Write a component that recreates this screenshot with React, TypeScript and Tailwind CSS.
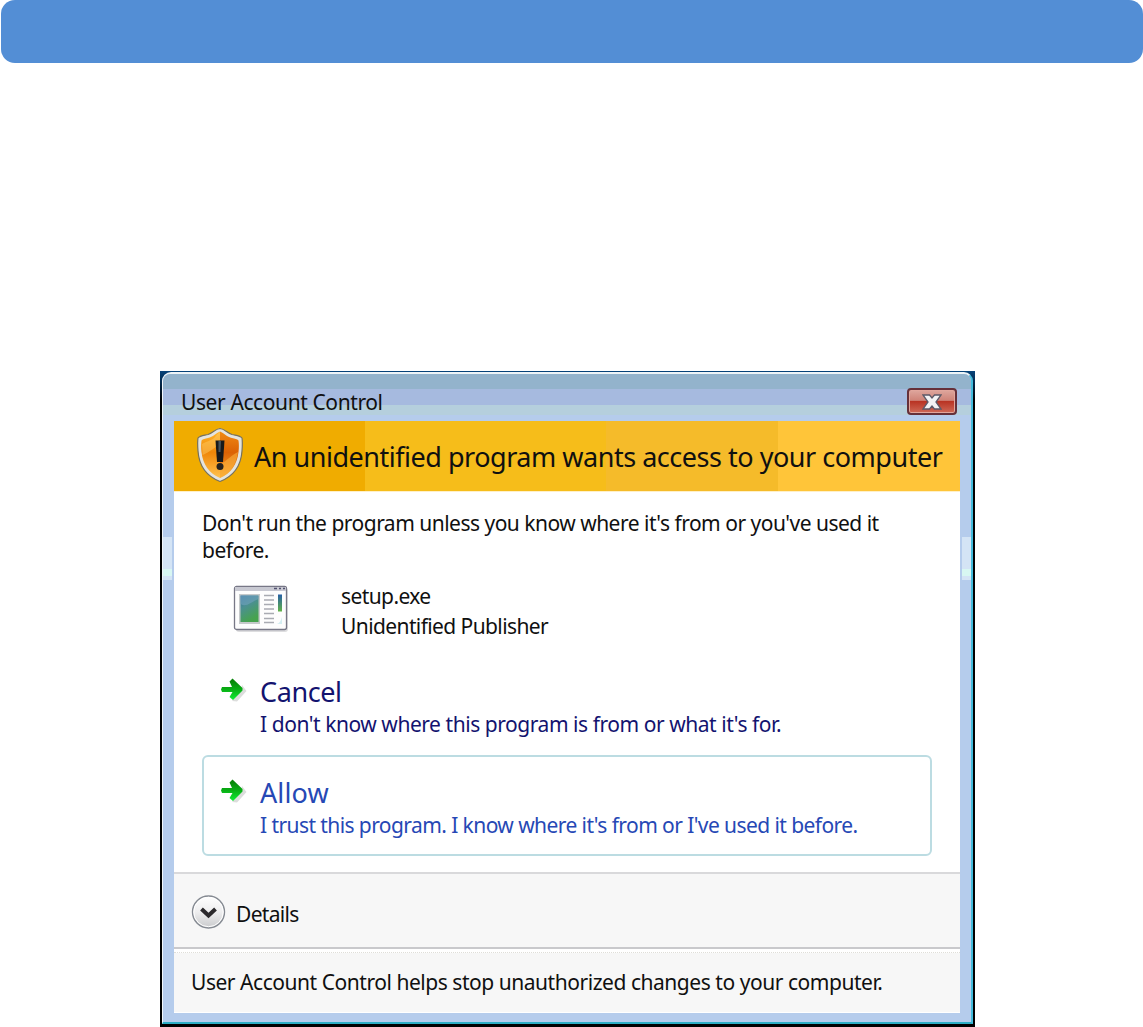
function ShieldIcon() {
  return (
    <svg viewBox="0 0 48 56" className="h-14 w-12 shrink-0" fill="none">
      <defs>
        <linearGradient id="shieldLeft" x1="0" y1="0" x2="0" y2="1">
          <stop offset="0" stopColor="#ffb52a" />
          <stop offset="0.45" stopColor="#ef8608" />
          <stop offset="1" stopColor="#ffc24d" />
        </linearGradient>
        <linearGradient id="shieldRight" x1="0" y1="0" x2="0" y2="1">
          <stop offset="0" stopColor="#f08a14" />
          <stop offset="0.45" stopColor="#dc6204" />
          <stop offset="1" stopColor="#f7a52c" />
        </linearGradient>
      </defs>
      <path d="M24 1.500C19 2 17 6 12 7.500C8 8.500 4 8.500 2 11C1.500 14 1.500 18 2 24C3 39 10 49 24 54.500C38 49 45 39 46 24C46.500 18 46.500 14 46 11C44 8.500 40 8.500 36 7.500C31 6 29 2 24 1.500Z" fill="#e4e4df" stroke="#77715c" strokeWidth="1.200" />
      <path d="M24 4.500C20 6 17 10 12 11C9 12 7 12 5.500 13.500C5 17 5 21 5.500 25C7 38 13 46 24 51Z" fill="url(#shieldLeft)" />
      <path d="M24 4.500C28 6 31 10 36 11C39 12 41 12 42.500 13.500C43 17 43 21 42.500 25C41 38 35 46 24 51Z" fill="url(#shieldRight)" />
      <path d="M6 17C11 14 18 13 21 7.500L24 5V17C17 22 10 27 6.500 28Z" fill="#ffd06a" opacity="0.45" />
      <path d="M24 38C31 33 37 27 42 25C40 38 35 46 24 51Z" fill="#ffbe45" opacity="0.5" />
      <path d="M19.500 13.500H28.500L27 35H21Z" fill="#17191b" />
      <path d="M22.500 14H25L24.500 25H22.500Z" fill="#45525c" />
      <circle cx="24" cy="39.500" r="3.500" fill="#24211d" />
    </svg>
  )
}

function ProgramIcon() {
  return (
    <svg viewBox="0 0 56 48" className="h-12 w-14 shrink-0" fill="none">
      <defs>
        <linearGradient id="picture" x1="0" y1="0" x2="0.4" y2="1">
          <stop offset="0" stopColor="#3474a8" />
          <stop offset="0.45" stopColor="#4b9090" />
          <stop offset="1" stopColor="#46a34e" />
        </linearGradient>
        <linearGradient id="gauge" x1="0" y1="0" x2="0" y2="1">
          <stop offset="0" stopColor="#275fa5" />
          <stop offset="1" stopColor="#62b347" />
        </linearGradient>
      </defs>
      <rect x="3" y="3" width="52" height="44" rx="3" fill="#dddddf" />
      <rect x="1.500" y="1.500" width="52" height="43" rx="2" fill="#fdfdfd" stroke="#777786" strokeWidth="1.300" />
      <path d="M2 2H53V6H2Z" fill="#c8c9d2" />
      <path d="M41 3.500H44M46 3.500H48M50 3.500H52" stroke="#525270" strokeWidth="1.500" />
      <rect x="6" y="9" width="21" height="30" fill="#c6cacb" />
      <rect x="7.500" y="10.500" width="18" height="26.500" fill="url(#picture)" />
      <path d="M7.500 19C14 23 19 16 25.500 14V10.500H7.500Z" fill="#73a4bd" opacity="0.6" />
      <path d="M31 10.500H41M31 15H41M31 19.500H41M31 24H41M31 28.500H41M31 33.500H41M31 37.500H41" stroke="#a9abb2" strokeWidth="1.300" />
      <rect x="45" y="9.500" width="4" height="17" fill="url(#gauge)" />
      <path d="M44 39C47 38 48 35 49 32V39Z" fill="#d4eef2" />
    </svg>
  )
}

function GreenArrow() {
  return (
    <svg viewBox="0 0 28 28" className="h-7 w-7 shrink-0" fill="none">
      <defs>
        <linearGradient id="arrow" x1="0" y1="0" x2="0" y2="1">
          <stop offset="0.1" stopColor="#078409" />
          <stop offset="0.5" stopColor="#08ae14" />
          <stop offset="1" stopColor="#10ee36" />
        </linearGradient>
      </defs>
      <path d="M12 25L17 25.500L26.500 15L22 9L21 15Z" fill="#dcdddc" />
      <path d="M2 11H12L9.500 5.500L12.500 2.500L22.500 12V14.500L13 24L9.500 21L12.500 16H2L1 13.500Z" fill="url(#arrow)" />
    </svg>
  )
}

function ExpandIcon() {
  return (
    <svg viewBox="0 0 36 36" className="h-9 w-9 shrink-0" fill="none">
      <defs>
        <linearGradient id="expand" x1="0" y1="0" x2="0" y2="1">
          <stop offset="0" stopColor="#ffffff" />
          <stop offset="0.5" stopColor="#eeeeef" />
          <stop offset="1" stopColor="#c9cacc" />
        </linearGradient>
      </defs>
      <circle cx="17.500" cy="17" r="16" fill="url(#expand)" stroke="#858a92" strokeWidth="1.400" />
      <circle cx="17.500" cy="17" r="14.700" stroke="#ffffff" strokeWidth="1" />
      <path d="M10.500 14L17.500 20.500L24.500 14" stroke="#2b292c" strokeWidth="4" />
    </svg>
  )
}

function CloseButton() {
  return (
    <button className="flex h-[27px] w-[50px] items-center justify-center rounded-[4px] border-2 border-[#663039] bg-[linear-gradient(#dea79e,#cf8378_45%,#b93424_50%,#cf6a58)] shadow-[inset_0_0_0_1px_#e2a69c]">
      <svg viewBox="0 0 20 16" className="h-4 w-5" fill="none">
        <path d="M1 1H7.500L10 4L12.500 1H19L14 8L19 15H12.500L10 12L7.500 15H1L6 8Z" fill="#f3f3f4" stroke="#5d5a68" strokeWidth="1.300" />
      </svg>
    </button>
  )
}

function FrameGlint() {
  return (
    <div className="mt-[116px] h-[43px] w-[9px] bg-[#d4e4f5] pt-8">
      <div className="h-[7px] bg-[#d8f7f2]" />
    </div>
  )
}

export default function App() {
  return (
    <div className="h-[1027px] w-[1143px] overflow-hidden bg-white font-['Noto_Sans','Open_Sans',sans-serif] whitespace-nowrap text-[#101010]">
      <header className="ml-px h-[63px] rounded-[14px] bg-[#538ed5]" />

      <main className="mt-[308px] ml-[160px] h-[656px] w-[815px] bg-black">
        <div className="h-[656px] bg-linear-to-b from-[#06437a] to-transparent to-[30px] pt-px pr-[2px] pb-[3px] pl-[2px]">
          <div className="flex h-[652px] flex-col rounded-t-[9px] border-t-2 border-r-2 border-b-2 border-l border-t-[#edf4f8] border-r-[#42bbdc] border-b-[#2cadc4] border-l-[#f1f6fa] bg-[#b5ccec]">
            <div className="flex h-[47px] shrink-0 items-start justify-between rounded-t-[7px] bg-[linear-gradient(#93b3cc_0_15px,#a6badf_15px_31px,#b5cfdd_31px_41px,#b5ccec_41px)] pt-[14px] pr-[14px] pl-[18px]">
              <span className="text-[21px] leading-7 tracking-[-0.4px]">User Account Control</span>
              <CloseButton />
            </div>

            <div className="flex h-[592px]">
              <div className="w-[11px] shrink-0"><FrameGlint /></div>
              <section className="flex w-[786px] shrink-0 flex-col bg-white">
                <div className="flex h-[71px] shrink-0 items-center border-b border-[#fff0c8] bg-[linear-gradient(90deg,#f0ac00_0_191px,#f6bd1a_191px_432px,#f5bb2a_432px_604px,#ffc539_604px)] pl-[22px]">
                  <div className="-mt-[3px]"><ShieldIcon /></div>
                  <h1 className="mt-[2px] ml-[10px] text-[27px] tracking-[-0.48px]">An unidentified program wants access to your computer</h1>
                </div>

                <div className="h-[380px] shrink-0 px-7 pt-[18px]">
                  <p className="text-[21px] leading-[27px] tracking-[-0.51px]">
                    Don't run the program unless you know where it's from or you've used it<br />
                    before.
                  </p>

                  <div className="mt-[17px] flex pl-[31px]">
                    <div className="pt-1"><ProgramIcon /></div>
                    <div className="ml-[52px] text-[21px] leading-[30px] tracking-[-0.6px]">
                      <p>setup.exe</p>
                      <p>Unidentified Publisher</p>
                    </div>
                  </div>

                  <button className="mt-[35px] flex w-full pl-[18px] text-left text-[#13136f]">
                    <GreenArrow />
                    <span className="ml-3">
                      <span className="block text-[27px] leading-8 tracking-[-0.4px]">Cancel</span>
                      <span className="block text-[21px] leading-8 tracking-[-0.45px]">I don't know where this program is from or what it's for.</span>
                    </span>
                  </button>

                  <button className="mt-[15px] flex h-[101px] w-[730px] items-start rounded-[6px] border-2 border-[#bcdce2] pt-5 pl-4 text-left text-[#2648b5]">
                    <GreenArrow />
                    <span className="ml-3">
                      <span className="block text-[27px] leading-8 tracking-[0.1px]">Allow</span>
                      <span className="block text-[21px] leading-8 tracking-[-0.58px]">I trust this program. I know where it's from or I've used it before.</span>
                    </span>
                  </button>
                </div>

                <div className="flex h-[75px] shrink-0 items-center border-t-2 border-[#d9d9db] bg-[#f7f7f7] pt-1 pl-[17px]">
                  <ExpandIcon />
                  <span className="mt-1 ml-[9px] text-[21px] tracking-[-0.7px]">Details</span>
                </div>
                <div className="h-[65px] shrink-0 border-t-2 border-[#c9c9cc] bg-[#f7f7f7]">
                  <div className="h-1 border-b border-dotted border-[#dfded8] bg-white" />
                  <p className="pt-[13px] pl-[17px] text-[21px] leading-8 tracking-[-0.46px]">User Account Control helps stop unauthorized changes to your computer.</p>
                </div>
              </section>
              <div className="flex w-[11px] shrink-0 justify-end"><FrameGlint /></div>
            </div>
          </div>
        </div>
      </main>
    </div>
  )
}
